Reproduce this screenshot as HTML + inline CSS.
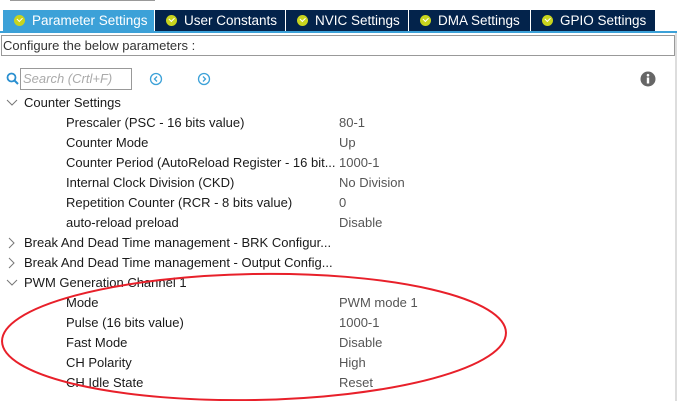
<!DOCTYPE html>
<html><head><meta charset="utf-8"><style>
*{margin:0;padding:0;box-sizing:border-box}
body{width:677px;height:401px;overflow:hidden;background:#fff;font-family:"Liberation Sans",sans-serif;font-size:13px;color:#1a1a1a;position:relative}
.abs{position:absolute;white-space:nowrap}
.tab{position:absolute;top:10px;height:21px;background:#03234b;color:#fff;font-size:13.5px;line-height:21px;padding-left:11px}
.tab.act{background:#3ca1d8}
.ck{display:inline-block;width:11px;height:11px;border-radius:50%;background:#c8d41e;vertical-align:-1px;margin-right:7px;position:relative}
.ck:after{content:"";position:absolute;left:3px;top:2px;width:4px;height:2.5px;border-left:1.5px solid #fff;border-bottom:1.5px solid #fff;transform:rotate(-45deg)}
.row{position:absolute;height:20px;line-height:20px;white-space:nowrap}
.v{color:#555}
</style></head><body>
<div class="abs" style="left:10px;top:0;width:145px;height:1px;background:#999"></div>
<div class="tab act" style="left:3px;width:151px"><span class="ck"></span>Parameter Settings</div>
<div class="tab" style="left:155px;width:130px"><span class="ck"></span>User Constants</div>
<div class="tab" style="left:286px;width:122px"><span class="ck"></span>NVIC Settings</div>
<div class="tab" style="left:409px;width:121px"><span class="ck"></span>DMA Settings</div>
<div class="tab" style="left:531px;width:124px"><span class="ck"></span>GPIO Settings</div>
<div class="abs" style="left:0;top:31px;width:677px;height:2px;background:#3ca1d8"></div>
<div class="abs" style="left:675px;top:33px;width:2px;height:368px;background:#ddd"></div>
<div class="abs" style="left:1px;top:35px;width:674px;height:21px;border:1px solid #999;line-height:19px;padding-left:1px;color:#333">Configure the below parameters :</div>
<svg class="abs" style="left:6px;top:72px" width="14" height="14"><circle cx="5.5" cy="5.5" r="4" fill="none" stroke="#2a8fd0" stroke-width="1.8"/><line x1="8.5" y1="8.5" x2="12" y2="12" stroke="#2a8fd0" stroke-width="2"/></svg>
<div class="abs" style="left:20px;top:68px;width:112px;height:22px;border:1px solid #999;color:#aaa;font-style:italic;line-height:20px;padding-left:2px">Search (Crtl+F)</div>
<svg class="abs" style="left:149px;top:72px" width="14" height="14"><circle cx="7" cy="7" r="5.5" fill="none" stroke="#3ca1d8" stroke-width="1.3"/><path d="M8 4.5L5.5 7L8 9.5" fill="none" stroke="#3ca1d8" stroke-width="1.3"/></svg>
<svg class="abs" style="left:197px;top:72px" width="14" height="14"><circle cx="7" cy="7" r="5.5" fill="none" stroke="#3ca1d8" stroke-width="1.3"/><path d="M6 4.5L8.5 7L6 9.5" fill="none" stroke="#3ca1d8" stroke-width="1.3"/></svg>
<svg class="abs" style="left:640px;top:71px" width="16" height="16"><circle cx="8" cy="8" r="7.5" fill="#666"/><rect x="6.8" y="6.5" width="2.4" height="6" fill="#fff"/><circle cx="8" cy="4.2" r="1.3" fill="#fff"/></svg>
<svg class="abs" style="left:6px;top:98px" width="12" height="10"><path d="M1 2L6 7L11 2" fill="none" stroke="#777" stroke-width="1"/></svg>
<div class="row" style="left:24px;top:93px">Counter Settings</div>
<div class="row" style="left:66px;top:113px">Prescaler (PSC - 16 bits value)</div><div class="row v" style="left:339px;top:113px">80-1</div>
<div class="row" style="left:66px;top:133px">Counter Mode</div><div class="row v" style="left:339px;top:133px">Up</div>
<div class="row" style="left:66px;top:153px">Counter Period (AutoReload Register - 16 bit...</div><div class="row v" style="left:339px;top:153px">1000-1</div>
<div class="row" style="left:66px;top:173px">Internal Clock Division (CKD)</div><div class="row v" style="left:339px;top:173px">No Division</div>
<div class="row" style="left:66px;top:193px">Repetition Counter (RCR - 8 bits value)</div><div class="row v" style="left:339px;top:193px">0</div>
<div class="row" style="left:66px;top:213px">auto-reload preload</div><div class="row v" style="left:339px;top:213px">Disable</div>
<svg class="abs" style="left:8px;top:237px" width="8" height="12"><path d="M1 1L6 6L1 11" fill="none" stroke="#777" stroke-width="1"/></svg>
<div class="row" style="left:24px;top:233px">Break And Dead Time management - BRK Configur...</div>
<svg class="abs" style="left:8px;top:257px" width="8" height="12"><path d="M1 1L6 6L1 11" fill="none" stroke="#777" stroke-width="1"/></svg>
<div class="row" style="left:24px;top:253px">Break And Dead Time management - Output Config...</div>
<svg class="abs" style="left:6px;top:278px" width="12" height="10"><path d="M1 2L6 7L11 2" fill="none" stroke="#777" stroke-width="1"/></svg>
<div class="row" style="left:24px;top:273px">PWM Generation Channel 1</div>
<div class="row" style="left:66px;top:293px">Mode</div><div class="row v" style="left:339px;top:293px">PWM mode 1</div>
<div class="row" style="left:66px;top:313px">Pulse (16 bits value)</div><div class="row v" style="left:339px;top:313px">1000-1</div>
<div class="row" style="left:66px;top:333px">Fast Mode</div><div class="row v" style="left:339px;top:333px">Disable</div>
<div class="row" style="left:66px;top:353px">CH Polarity</div><div class="row v" style="left:339px;top:353px">High</div>
<div class="row" style="left:66px;top:373px">CH Idle State</div><div class="row v" style="left:339px;top:373px">Reset</div>
<svg class="abs" style="left:0;top:0" width="677" height="401"><ellipse cx="254" cy="337" rx="252" ry="63" fill="none" stroke="#e8202a" stroke-width="2" transform="rotate(-1 254 337)"/></svg>
</body></html>
